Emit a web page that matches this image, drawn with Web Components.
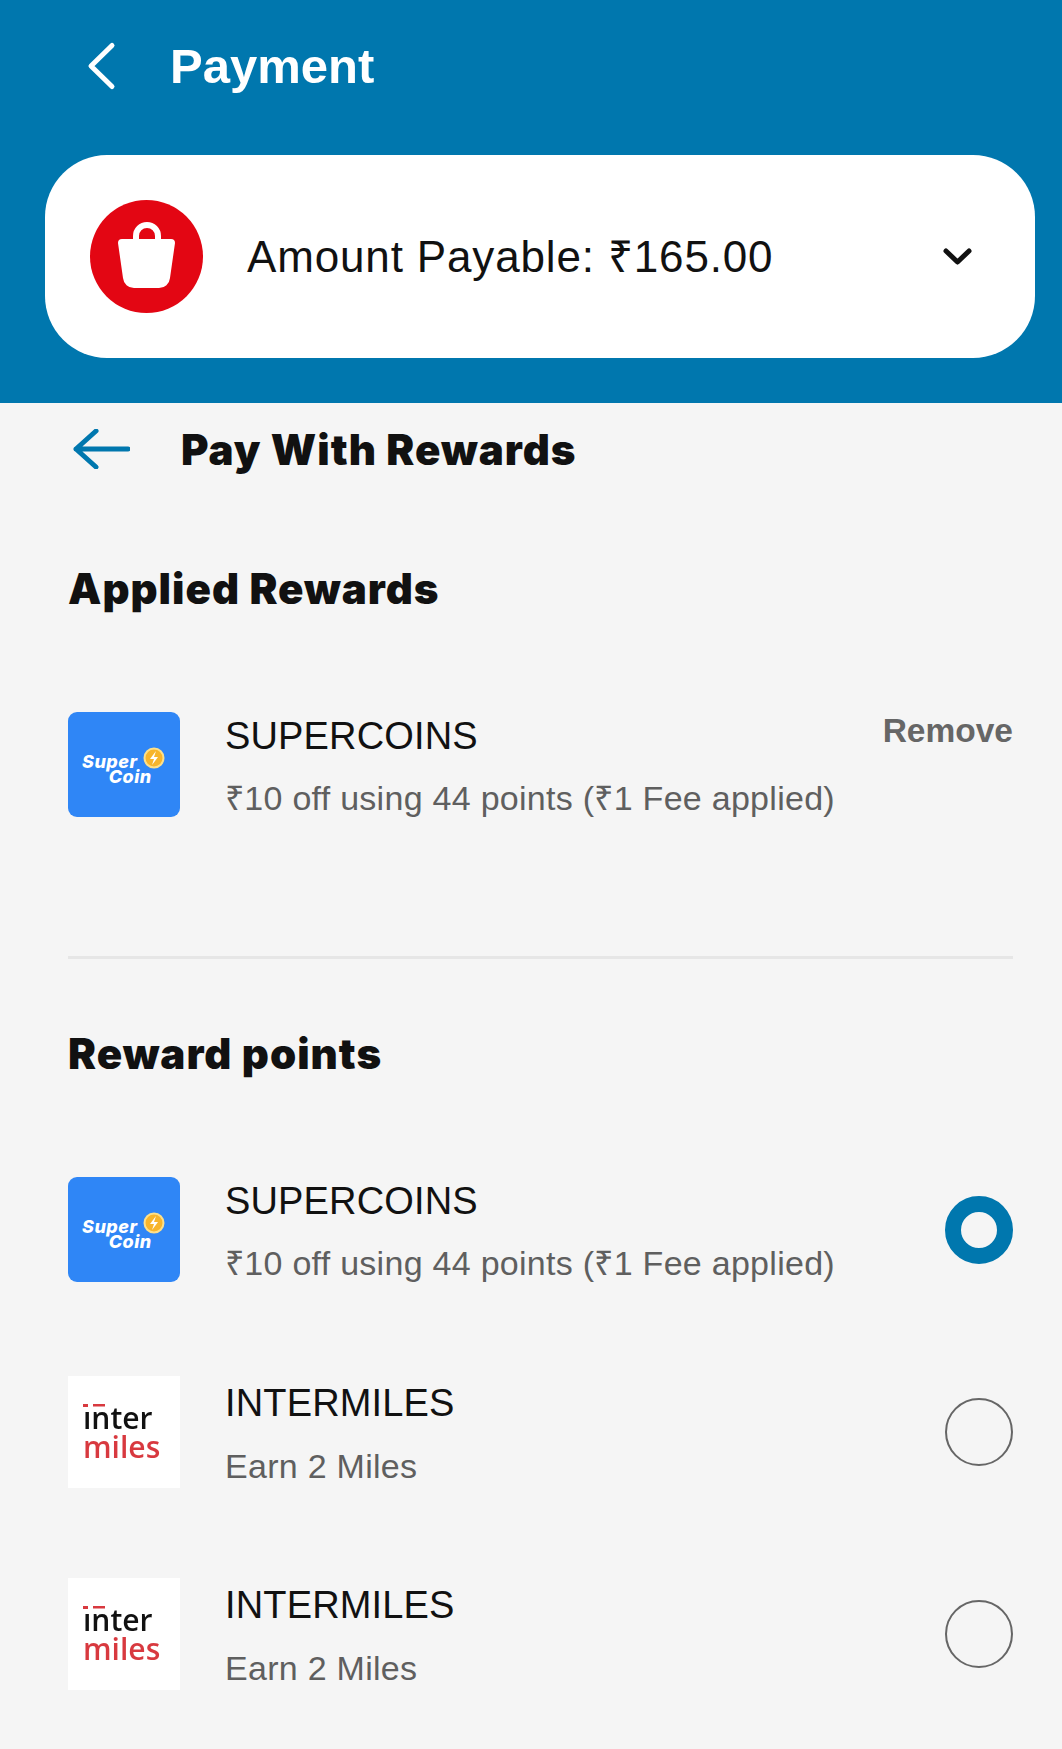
<!DOCTYPE html>
<html>
<head>
<meta charset="utf-8">
<title>Payment</title>
<style>
    html, body { margin: 0; background: #f5f5f5; }
    body { width: 1062px; height: 1749px; overflow: hidden; font-family: "Liberation Sans", Arial, sans-serif; color: #111; }
    .list { display: block; padding: 0 49px 0 68px; }
    .rule { display: block; height: 3px; background: #e6e6e6; margin-top: 139px; }
</style>
</head>
<body>
<pay-header title="Payment" amount="Amount Payable: ₹165.00"></pay-header>
<sub-nav>Pay With Rewards</sub-nav>
<div class="list">
    <section-title top="64">Applied Rewards</section-title>
    <reward-row top="93" height="105" name="SUPERCOINS" note="₹10 off using 44 points (₹1 Fee applied)" offset="0" gap="14">
        <supercoin-logo slot="logo"></supercoin-logo>
        <remove-link slot="action">Remove</remove-link>
    </reward-row>
    <div class="rule"></div>
    <section-title top="65">Reward points</section-title>
    <reward-row top="93" height="105" name="SUPERCOINS" note="₹10 off using 44 points (₹1 Fee applied)" offset="0" gap="14" center>
        <supercoin-logo slot="logo"></supercoin-logo>
        <radio-dot slot="action" checked></radio-dot>
    </reward-row>
    <reward-row top="94" height="112" name="INTERMILES" note="Earn 2 Miles" offset="3" gap="15" center>
        <intermiles-logo slot="logo"></intermiles-logo>
        <radio-dot slot="action"></radio-dot>
    </reward-row>
    <reward-row top="90" height="112" name="INTERMILES" note="Earn 2 Miles" offset="3" gap="15" center>
        <intermiles-logo slot="logo"></intermiles-logo>
        <radio-dot slot="action"></radio-dot>
    </reward-row>
</div>

<script>
class PayHeader extends HTMLElement {
    constructor() {
        super();
        this.attachShadow({ mode: 'open' });
        this.shadowRoot.innerHTML = `
            <style>
                :host { display: block; height: 403px; background: #0077ae; box-sizing: border-box; padding: 0 27px 0 45px; }
                .nav { height: 155px; display: flex; align-items: flex-start; padding-top: 41px; box-sizing: border-box; }
                .nav svg { margin-left: 41px; width: 30px; height: 50px; flex: none; }
                h1 { margin: -5px 0 0 54px; font-size: 49px; line-height: 60px; font-weight: 700; color: #fff; }
                .card { height: 203px; background: #fff; border-radius: 62px; display: flex; align-items: center; padding: 0 63px 0 45px; box-sizing: border-box; }
                .bag { width: 113px; height: 113px; flex: none; }
                .amount { flex: 1; margin: -4px 0 0 44px; font-size: 44px; letter-spacing: 0.85px; color: #111; white-space: nowrap; }
                .chev { width: 29px; height: 17px; flex: none; }
            </style>
            <div class="nav">
                <svg viewBox="0 0 30 50"><path d="M26 4.5 L5 25 L26 45.5" fill="none" stroke="#fff" stroke-width="5" stroke-linecap="round" stroke-linejoin="round"/></svg>
                <h1>${this.getAttribute('title')}</h1>
            </div>
            <div class="card">
                <svg class="bag" viewBox="0 0 113 113">
                    <circle cx="56.5" cy="56.5" r="56.5" fill="#e30613"/>
                    <path d="M46 42V36a11 11 0 0 1 22 0V42" fill="none" stroke="#fff" stroke-width="6"/>
                    <path d="M32 39H81a4 4 0 0 1 4 4L80 78a11 11 0 0 1-11 10H44a11 11 0 0 1-11-10L28 43a4 4 0 0 1 4-4Z" fill="#fff"/>
                </svg>
                <div class="amount">${this.getAttribute('amount')}</div>
                <svg class="chev" viewBox="0 0 29 17"><path d="M3 3 L14.5 14 L26 3" fill="none" stroke="#111" stroke-width="5" stroke-linecap="round" stroke-linejoin="round"/></svg>
            </div>
        `;
    }
}

class SubNav extends HTMLElement {
    constructor() {
        super();
        this.attachShadow({ mode: 'open' });
        this.shadowRoot.innerHTML = `
            <style>
                :host { display: flex; align-items: center; height: 92px; padding-left: 73px; font-family: Inter, "Liberation Sans", sans-serif; font-size: 42px; font-weight: 900; letter-spacing: 1px; color: #111; }
                svg { width: 57px; height: 40px; flex: none; margin-right: 51px; }
            </style>
            <svg viewBox="0 0 57 40"><path d="M23 2 L3 20 L23 38 M3 20 H55" fill="none" stroke="#0077ae" stroke-width="5" stroke-linecap="round" stroke-linejoin="round"/></svg>
            <slot></slot>
        `;
    }
}

class SectionTitle extends HTMLElement {
    constructor() {
        super();
        this.attachShadow({ mode: 'open' });
        this.shadowRoot.innerHTML = `
            <style>
                :host { display: block; height: 60px; line-height: 60px; font-family: Inter, "Liberation Sans", sans-serif; font-size: 42px; font-weight: 900; letter-spacing: 1px; color: #111; margin-top: ${this.getAttribute('top')}px; }
            </style>
            <slot></slot>
        `;
    }
}

class RewardRow extends HTMLElement {
    constructor() {
        super();
        this.attachShadow({ mode: 'open' });
        const center = this.hasAttribute('center');
        this.shadowRoot.innerHTML = `
            <style>
                :host { display: flex; height: ${this.getAttribute('height')}px; align-items: ${center ? 'center' : 'flex-start'}; margin-top: ${this.getAttribute('top')}px; }
                .text { flex: 1; margin-left: 45px; align-self: flex-start; padding-top: ${this.getAttribute('offset')}px; }
                .name { font-size: 38px; line-height: 48px; letter-spacing: 0.15px; color: #111; }
                .note { font-size: 34px; line-height: 48px; letter-spacing: 0.28px; margin-top: ${this.getAttribute('gap')}px; color: #5f5f5f; }
            </style>
            <slot name="logo"></slot>
            <div class="text">
                <div class="name">${this.getAttribute('name')}</div>
                <div class="note">${this.getAttribute('note')}</div>
            </div>
            <slot name="action"></slot>
        `;
    }
}

class RemoveLink extends HTMLElement {
    constructor() {
        super();
        this.attachShadow({ mode: 'open' });
        this.shadowRoot.innerHTML = `
            <style>
                :host { display: block; font-size: 33.5px; line-height: 40px; font-weight: 700; color: #666; margin-top: -1px; }
            </style>
            <slot></slot>
        `;
    }
}

class RadioDot extends HTMLElement {
    constructor() {
        super();
        this.attachShadow({ mode: 'open' });
        this.shadowRoot.innerHTML = `
            <style>
                :host { display: block; width: 68px; height: 68px; box-sizing: border-box; border-radius: 50%; border: 2px solid #666; flex: none; }
                :host([checked]) { border: 16px solid #0077ae; }
            </style>
        `;
    }
}

class SupercoinLogo extends HTMLElement {
    constructor() {
        super();
        this.attachShadow({ mode: 'open' });
        this.shadowRoot.innerHTML = `
            <style>
                :host { display: block; position: relative; width: 112px; height: 105px; flex: none; background: #2f86f6; border-radius: 9px; }
                svg { position: absolute; left: 0; top: 0; }
                .word { position: absolute; left: 14px; top: 42px; white-space: pre; font-family: Inter, "Liberation Sans", sans-serif; font-weight: 800; font-style: italic; font-size: 18px; line-height: 15px; letter-spacing: 0.5px; color: #fff; }
            </style>
            <svg width="112" height="105" viewBox="0 0 112 105">
                <circle cx="86" cy="46" r="9.5" fill="#f7b52c" stroke="#fde08a" stroke-width="2"/>
                <path d="M88 39 L82 47 H86 L84 53 L90 45 H86 Z" fill="#fff"/>
            </svg>
            <div class="word">Super
      Coin</div>
        `;
    }
}

class IntermilesLogo extends HTMLElement {
    constructor() {
        super();
        this.attachShadow({ mode: 'open' });
        this.shadowRoot.innerHTML = `
            <style>
                :host { display: block; position: relative; width: 112px; height: 112px; flex: none; background: #fff; }
                .word { position: absolute; left: 15px; top: 27px; white-space: pre; font-family: "Open Sans", sans-serif; font-weight: 600; font-size: 30px; line-height: 29px; color: transparent; background: linear-gradient(#111 50%, #d8393f 50%); -webkit-background-clip: text; background-clip: text; }
                svg { position: absolute; left: 0; top: 0; }
            </style>
            <div class="word">inter
miles</div>
            <svg width="112" height="112" viewBox="0 0 112 112">
                <rect x="14" y="26" width="24" height="9" fill="#fff"/>
                <rect x="15" y="28" width="5" height="3" fill="#d8393f"/>
                <rect x="25" y="28" width="12" height="2.5" fill="#d8393f"/>
            </svg>
        `;
    }
}

customElements.define('pay-header', PayHeader);
customElements.define('sub-nav', SubNav);
customElements.define('section-title', SectionTitle);
customElements.define('reward-row', RewardRow);
customElements.define('remove-link', RemoveLink);
customElements.define('radio-dot', RadioDot);
customElements.define('supercoin-logo', SupercoinLogo);
customElements.define('intermiles-logo', IntermilesLogo);
</script>
</body>
</html>
